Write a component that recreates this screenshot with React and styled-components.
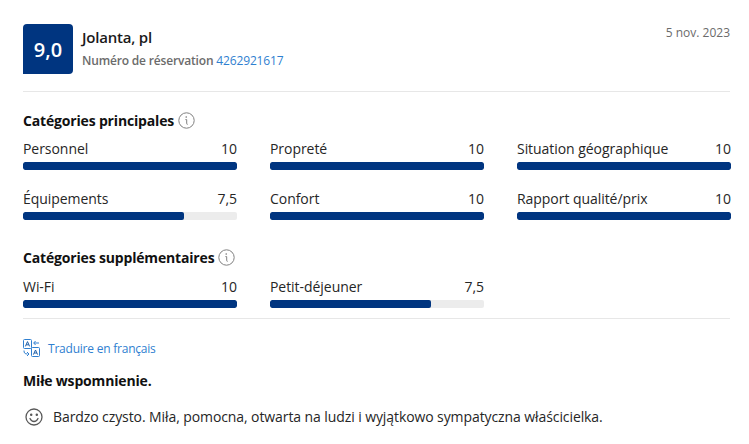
import React from 'react';
import styled, { createGlobalStyle } from 'styled-components';

const GlobalStyle = createGlobalStyle`
  html, body { margin: 0; padding: 0; background: #fff; }
  body { font-family: "Open Sans", "Noto Sans", "Liberation Sans", sans-serif; color: #1a1a1a; }
`;

const Page = styled.div`
  width: 749px;
  height: 444px;
  box-sizing: border-box;
  padding: 24px 19px 0 23px;
  overflow: hidden;
`;

const Header = styled.header`
  display: flex;
  justify-content: space-between;
  align-items: flex-start;
  height: 67px;
  border-bottom: 1px solid #e7e7e7;
`;

const Guest = styled.div`
  display: flex;
  gap: 9px;
`;

const Score = styled.div`
  width: 50px;
  height: 50px;
  display: flex;
  align-items: center;
  justify-content: center;
  background: #003580;
  border-radius: 4px 4px 4px 0;
  color: #fff;
  font-size: 20px;
  font-weight: 600;
`;

const GuestText = styled.div`
  display: flex;
  flex-direction: column;
  gap: 6px;
  padding-top: 4px;
`;

const Name = styled.div`
  font-size: 15px;
  line-height: 19px;
  font-weight: 600;
  letter-spacing: -0.2px;
`;

const Booking = styled.div`
  font-size: 12px;
  line-height: 16px;
  font-weight: 600;
  color: #6b6b6b;
  letter-spacing: -0.17px;
`;

const BookingLink = styled.span`
  color: #2f7fd0;
  font-weight: 400;
  letter-spacing: -0.15px;
`;

const DateText = styled.div`
  font-size: 12px;
  line-height: 18px;
  color: #6b6b6b;
`;

const Section = styled.section`
  padding-top: ${(p) => p.$top}px;
`;

const Heading = styled.h3`
  display: flex;
  align-items: center;
  gap: 4px;
  margin: 0 0 ${(p) => p.$bottom}px;
  height: 20px;
  font-size: 14px;
  font-weight: 700;
  color: #111;
  letter-spacing: -0.17px;
`;

const Grid = styled.div`
  display: grid;
  grid-template-columns: repeat(3, 214px);
  column-gap: 33px;
  row-gap: 19px;
`;

const RowLabel = styled.div`
  display: flex;
  justify-content: space-between;
  font-size: 14px;
  line-height: 20px;
  margin-bottom: 3px;
  color: #262626;
  letter-spacing: -0.05px;
`;

const Track = styled.div`
  height: 8px;
  border-radius: 2px;
  background: #ececec;
  overflow: hidden;
`;

const Fill = styled.div`
  height: 100%;
  background: #003580;
  border-radius: 2px;
`;

const Divider = styled.hr`
  margin: 10px 0 0;
  border: 0;
  border-top: 1px solid #e7e7e7;
`;

const Translate = styled.div`
  display: flex;
  align-items: center;
  gap: 8px;
  margin-top: 20px;
  height: 18px;
  font-size: 12px;
  color: #2f7fd0;
  letter-spacing: -0.22px;
`;

const Title = styled.div`
  margin-top: 14px;
  font-size: 14px;
  line-height: 20px;
  font-weight: 700;
  color: #111;
  letter-spacing: -0.17px;
`;

const Comment = styled.div`
  display: flex;
  align-items: center;
  gap: 10px;
  margin-top: 16px;
  margin-left: 2px;
  font-size: 14px;
  line-height: 20px;
  color: #262626;
  letter-spacing: -0.09px;
`;

const InfoIcon = () => (
  <svg width="17" height="17" viewBox="0 0 17 17" fill="none" stroke="#808080">
    <circle cx="8.5" cy="8.5" r="7.7" strokeWidth="1" />
    <path d="M7.4 7.6h1.3v4c0 .6.3.8.9.7" strokeWidth="1" />
    <circle cx="8.2" cy="5" r=".5" fill="#808080" strokeWidth=".6" />
  </svg>
);

const TranslateIcon = () => (
  <svg width="17" height="18" viewBox="0 0 17 18" fill="none" stroke="#2f7fd0" strokeWidth="1">
    <rect x="0.5" y="0.5" width="8" height="9" rx="1" />
    <path d="M2.4 7.4 4.5 2.6l2.1 4.8M3.2 5.8h2.6" stroke="#1f5fa8" />
    <rect x="8.5" y="8.5" width="8" height="9" rx="1" />
    <path d="M10.4 15.6 12.5 11l2.1 4.6M11.2 14h2.6" stroke="#1f5fa8" />
    <path d="M11 4h5M12.6 2 10.6 4l2 2M1 11.5c0 2.5.8 3.5 3.5 3.5M4 13l2 2-2 2" />
  </svg>
);

const SmileIcon = () => (
  <svg width="18" height="18" viewBox="0 0 18 18" fill="none" stroke="#595959" strokeWidth="1.3">
    <circle cx="9" cy="9" r="8" />
    <path d="M5 10.5c1 2.2 2.4 3 4 3s3-.8 4-3" strokeLinecap="round" />
    <circle cx="6.2" cy="6.8" r=".6" fill="#595959" />
    <circle cx="11.8" cy="6.8" r=".6" fill="#595959" />
  </svg>
);

const ScoreRow = ({ label, value }) => (
  <div>
    <RowLabel>
      <span>{label}</span>
      <span>{value.toString().replace('.', ',')}</span>
    </RowLabel>
    <Track>
      <Fill style={{ width: `${value * 10}%` }} />
    </Track>
  </div>
);

const main = [
  ['Personnel', 10],
  ['Propreté', 10],
  ['Situation géographique', 10],
  ['Équipements', 7.5],
  ['Confort', 10],
  ['Rapport qualité/prix', 10],
];

const extra = [
  ['Wi-Fi', 10],
  ['Petit-déjeuner', 7.5],
];

export default function App() {
  return (
    <Page>
      <GlobalStyle />
      <Header>
        <Guest>
          <Score>9,0</Score>
          <GuestText>
            <Name>Jolanta, pl</Name>
            <Booking>
              Numéro de réservation <BookingLink>4262921617</BookingLink>
            </Booking>
          </GuestText>
        </Guest>
        <DateText>5 nov. 2023</DateText>
      </Header>

      <Section $top={18}>
        <Heading $bottom={9}>Catégories principales <InfoIcon /></Heading>
        <Grid>
          {main.map(([label, value]) => <ScoreRow key={label} label={label} value={value} />)}
        </Grid>
      </Section>

      <Section $top={27}>
        <Heading $bottom={10}>Catégories supplémentaires <InfoIcon /></Heading>
        <Grid>
          {extra.map(([label, value]) => <ScoreRow key={label} label={label} value={value} />)}
        </Grid>
      </Section>

      <Divider />
      <Translate><TranslateIcon /> Traduire en français</Translate>
      <Title>Miłe wspomnienie.</Title>
      <Comment>
        <SmileIcon />
        Bardzo czysto. Miła, pomocna, otwarta na ludzi i wyjątkowo sympatyczna właścicielka.
      </Comment>
    </Page>
  );
}
